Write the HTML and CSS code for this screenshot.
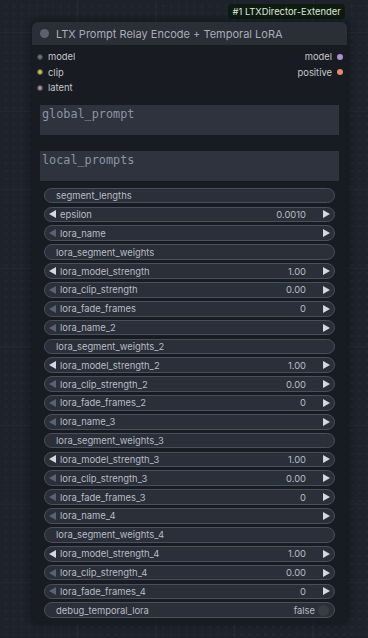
FILE: index.html
```html
<!DOCTYPE html>
<html lang="en">

<head>
  <meta charset="UTF-8">
  <meta name="viewport" content="width=device-width, initial-scale=1.0">
  <title>LTX Prompt Relay Encode + Temporal LoRA</title>
  <link rel="stylesheet" href="styles.css">
</head>

<body>
  <div class="canvas">
    <div class="badge">#1 LTXDirector-Extender</div>

    <div class="node">
      <div class="node-title">
        <span class="title-dot"></span>
        <span>LTX Prompt Relay Encode + Temporal LoRA</span>
      </div>

      <div class="slots">
        <div class="slot-col">
          <div class="slot"><span class="dot dot-model-in"></span>model</div>
          <div class="slot"><span class="dot dot-clip"></span>clip</div>
          <div class="slot"><span class="dot dot-latent"></span>latent</div>
        </div>
        <div class="slot-col out">
          <div class="slot">model<span class="dot dot-model-out"></span></div>
          <div class="slot">positive<span class="dot dot-positive"></span></div>
        </div>
      </div>

      <div class="prompt">global_prompt</div>
      <div class="prompt">local_prompts</div>

      <div class="widgets">
        <div class="widget text">segment_lengths</div>
        <div class="widget num"><span class="arr left"></span><span class="label">epsilon</span><span class="val">0.0010</span><span class="arr right"></span></div>
        <div class="widget num"><span class="arr left dim"></span><span class="label">lora_name</span><span class="val"></span><span class="arr right"></span></div>
        <div class="widget text">lora_segment_weights</div>
        <div class="widget num"><span class="arr left"></span><span class="label">lora_model_strength</span><span class="val">1.00</span><span class="arr right"></span></div>
        <div class="widget num"><span class="arr left dim"></span><span class="label">lora_clip_strength</span><span class="val">0.00</span><span class="arr right"></span></div>
        <div class="widget num"><span class="arr left dim"></span><span class="label">lora_fade_frames</span><span class="val">0</span><span class="arr right"></span></div>

        <div class="widget num"><span class="arr left dim"></span><span class="label">lora_name_2</span><span class="val"></span><span class="arr right"></span></div>
        <div class="widget text">lora_segment_weights_2</div>
        <div class="widget num"><span class="arr left"></span><span class="label">lora_model_strength_2</span><span class="val">1.00</span><span class="arr right"></span></div>
        <div class="widget num"><span class="arr left dim"></span><span class="label">lora_clip_strength_2</span><span class="val">0.00</span><span class="arr right"></span></div>
        <div class="widget num"><span class="arr left dim"></span><span class="label">lora_fade_frames_2</span><span class="val">0</span><span class="arr right"></span></div>

        <div class="widget num"><span class="arr left dim"></span><span class="label">lora_name_3</span><span class="val"></span><span class="arr right"></span></div>
        <div class="widget text">lora_segment_weights_3</div>
        <div class="widget num"><span class="arr left"></span><span class="label">lora_model_strength_3</span><span class="val">1.00</span><span class="arr right"></span></div>
        <div class="widget num"><span class="arr left dim"></span><span class="label">lora_clip_strength_3</span><span class="val">0.00</span><span class="arr right"></span></div>
        <div class="widget num"><span class="arr left dim"></span><span class="label">lora_fade_frames_3</span><span class="val">0</span><span class="arr right"></span></div>

        <div class="widget num"><span class="arr left dim"></span><span class="label">lora_name_4</span><span class="val"></span><span class="arr right"></span></div>
        <div class="widget text">lora_segment_weights_4</div>
        <div class="widget num"><span class="arr left"></span><span class="label">lora_model_strength_4</span><span class="val">1.00</span><span class="arr right"></span></div>
        <div class="widget num"><span class="arr left dim"></span><span class="label">lora_clip_strength_4</span><span class="val">0.00</span><span class="arr right"></span></div>
        <div class="widget num"><span class="arr left dim"></span><span class="label">lora_fade_frames_4</span><span class="val">0</span><span class="arr right"></span></div>

        <div class="widget toggle"><span class="label">debug_temporal_lora</span><span class="val">false</span><span class="knob"></span></div>
      </div>
    </div>
  </div>
</body>
</html>
```

FILE: styles.css
```css
html, body {
  margin: 0;
  height: 100%;
}
body {
  background-color: #1d222b;
  background-image:
    linear-gradient(to right, rgba(255, 255, 255, 0.035) 1px, transparent 1px),
    linear-gradient(to bottom, rgba(255, 255, 255, 0.035) 1px, transparent 1px),
    radial-gradient(circle, rgba(255, 255, 255, 0.05) 0.6px, transparent 0.9px);
  background-size: 78.6px 78.6px, 78.6px 78.6px, 7.86px 7.86px;
  background-position: 77px 0, 0 32px, 2px 2px;
  font-family: Inter, "Noto Sans", sans-serif;
  overflow: hidden;
}
.canvas {
  position: relative;
  width: 368px;
  height: 638px;
}
.badge {
  position: absolute;
  left: 228px;
  top: 4px;
  height: 15px;
  padding: 0 4.5px;
  background-color: #0e1b0f;
  color: #dfe6df;
  font-size: 9.4px;
  line-height: 15px;
  border-radius: 4px;
}
.node {
  position: absolute;
  left: 32px;
  top: 22px;
  width: 315px;
  padding-bottom: 4px;
  background-color: #181b21;
  border-radius: 6px;
  box-shadow: 0 0 6px 2px rgba(0, 0, 0, 0.35);
}
.node-title {
  height: 23px;
  display: flex;
  align-items: center;
  gap: 7px;
  padding-left: 8px;
  background-color: #2a2e37;
  border-radius: 6px 6px 0 0;
  color: #a8adb6;
  font-size: 11px;
}
.title-dot {
  width: 9px;
  height: 9px;
  border-radius: 50%;
  background-color: #5b616e;
}
.slots {
  display: flex;
  justify-content: space-between;
  padding: 4px 0 0;
}
.slot-col {
  display: flex;
  flex-direction: column;
}
.slot {
  height: 15.6px;
  display: flex;
  align-items: center;
  gap: 5px;
  color: #c3c7cd;
  font-size: 9.4px;
  padding-left: 5px;
}
.slot-col.out .slot {
  justify-content: flex-end;
  padding-left: 0;
  padding-right: 4px;
}
.dot {
  width: 6px;
  height: 6px;
  border-radius: 50%;
  box-sizing: border-box;
}
.dot-model-in {
  background-color: #6a6f7c;
  border: 1.5px solid #3a3e48;
}
.dot-clip {
  background-color: #c8bd55;
  border: 1.5px solid #5c5a3a;
}
.dot-latent {
  background-color: #a08c9f;
  border: 1.5px solid #4d4652;
}
.dot-model-out {
  background-color: #a892d3;
}
.dot-positive {
  background-color: #e28a6c;
}
.prompt {
  margin: 9px 8px 0;
  height: 30px;
  box-sizing: border-box;
  padding: 2px 0 0 2px;
  background-color: #2e333e;
  color: #8c95a4;
  font-family: "DejaVu Sans Mono", monospace;
  font-size: 11.8px;
  line-height: 14px;
}
.prompt + .prompt {
  margin-top: 16px;
}
.widgets {
  display: flex;
  flex-direction: column;
  gap: 3.16px;
  margin: 7px 12px 0;
}
.widget {
  height: 15.7px;
  box-sizing: border-box;
  border: 1px solid #494f5b;
  border-radius: 8px;
  background-color: #2a2f39;
  display: flex;
  align-items: center;
  color: #b9bdc4;
  font-size: 9.4px;
  white-space: nowrap;
}
.widget.text {
  padding-left: 11px;
}
.widget .label {
  flex: 1;
}
.widget.num {
  padding: 0 4px 0 4px;
}
.widget.num .label {
  margin-left: 4px;
}
.widget.num .val {
  margin-right: 17px;
}
.arr {
  width: 0;
  height: 0;
  border-top: 4px solid transparent;
  border-bottom: 4px solid transparent;
}
.arr.left {
  border-right: 7px solid #d5d8dd;
}
.arr.left.dim {
  border-right-color: #5c6270;
}
.arr.right {
  border-left: 7px solid #d5d8dd;
}
.widget.toggle {
  padding: 0 5px 0 11px;
}
.widget.toggle .val {
  margin-right: 3px;
}
.knob {
  width: 11px;
  height: 11px;
  border-radius: 50%;
  background-color: #3a3c41;
}
```
